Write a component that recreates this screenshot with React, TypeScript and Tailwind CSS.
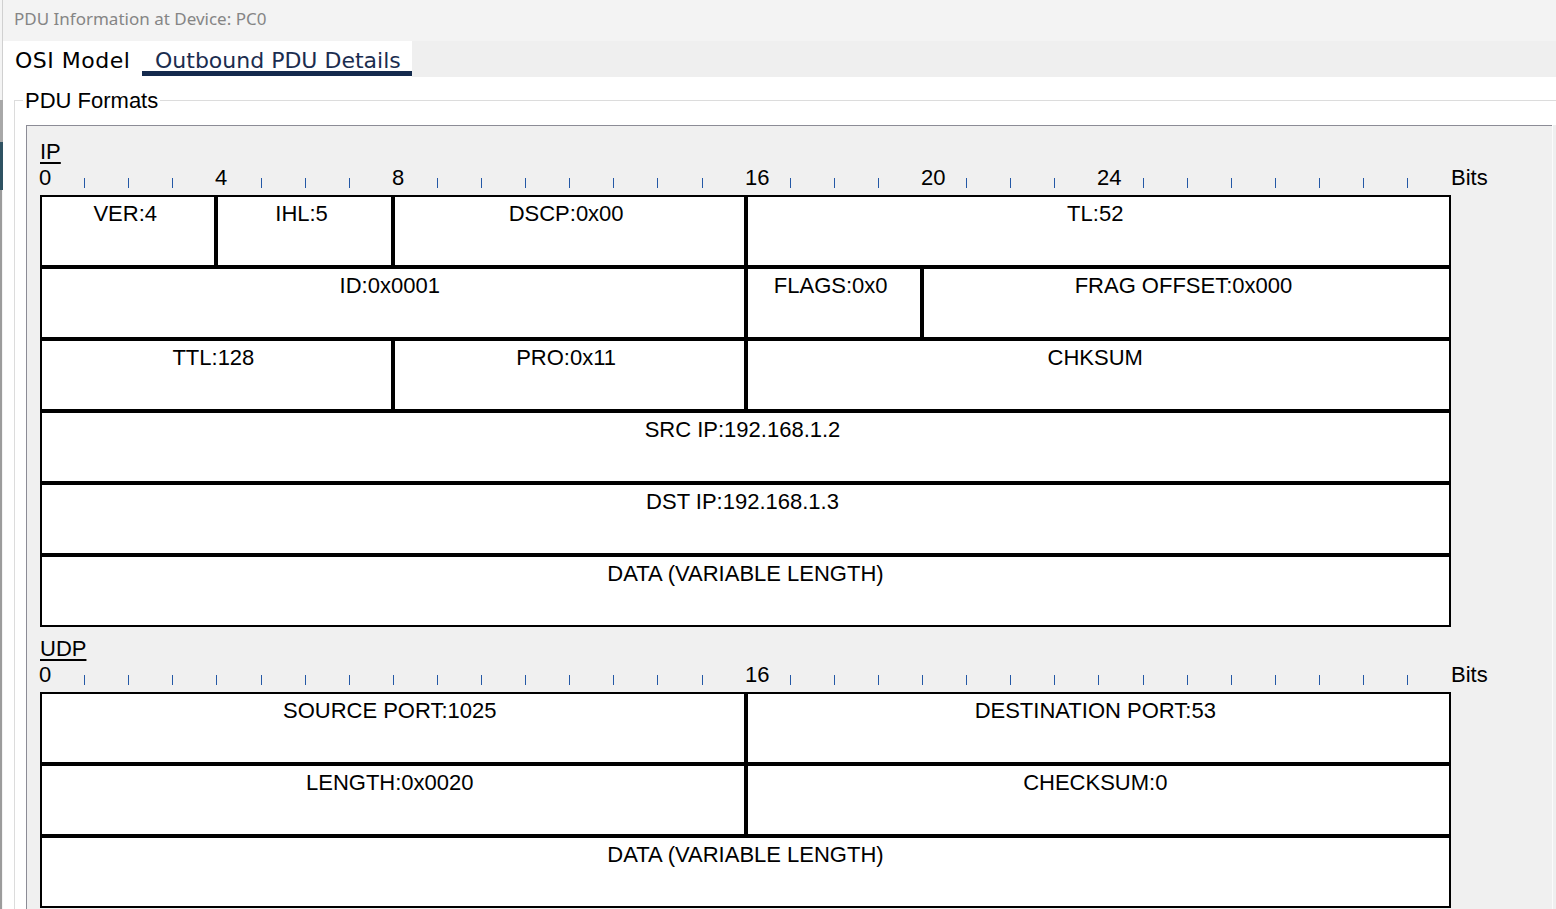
import React from "react";

const STEP = 44.1;

function Ruler({ marks }: { marks: number[] }) {
  const ticks: number[] = [];
  for (let i = 1; i < 32; i++) if (!marks.includes(i)) ticks.push(i);
  return (
    <div className="relative h-[31px] w-[1480px] shrink-0">
      {marks.map((m) => (
        <span
          key={"m" + m}
          className="absolute top-[1px] text-[22px] leading-[25px] text-black"
          style={{ left: Math.round(m * STEP) - 1 }}
        >
          {m}
        </span>
      ))}
      {ticks.map((t) => (
        <span
          key={"t" + t}
          className="absolute top-[14px] h-[10px] w-px bg-[#2458a6]"
          style={{ left: Math.round(t * STEP) }}
        />
      ))}
      <span className="absolute left-[1411px] top-[1px] text-[22px] leading-[25px] text-black">
        Bits
      </span>
    </div>
  );
}

function Cell({ label, span, centered }: { label: string; span: string; centered?: boolean }) {
  return (
    <div
      className={`${span} ${centered ? "" : "pr-[6px]"} h-[72px] border-2 border-black bg-white pt-[4px] text-center text-[22px] leading-[25px] text-black whitespace-nowrap`}
    >
      {label}
    </div>
  );
}

function Label({ text }: { text: string }) {
  return (
    <div className="h-[25px] shrink-0 text-[22px] leading-[25px] text-black">
      <span className="underline decoration-[2px] underline-offset-[3px]">{text}</span>
    </div>
  );
}

export default function App() {
  return (
    <div className="relative flex h-[909px] w-[1556px] overflow-hidden bg-white font-['Liberation_Sans',Arial,sans-serif]">
      {/* left window edge */}
      <div className="flex w-[3px] shrink-0 flex-col">
        <div className="h-[100px] border-r border-[#d0d0d0] bg-[#f4f4f4]" />
        <div className="h-[42px] bg-[#a8a8a8]" />
        <div className="h-[48px] bg-[#2f5262]" />
        <div className="flex-1 border-r border-[#f4f4f4] bg-[#9c9c9c]" />
      </div>

      <div className="flex min-w-0 flex-1 flex-col">
        {/* title bar */}
        <div className="h-[41px] shrink-0 bg-[#f3f3f3] pl-[11px] pt-[7px] font-['Noto_Sans',sans-serif] text-[17px] leading-[23px] text-[#858585]">
          PDU Information at Device: PC0
        </div>

        {/* tabs */}
        <div className="flex h-[36px] shrink-0 bg-[#efefef] font-['DejaVu_Sans',sans-serif] text-[22px] leading-[26px]">
          <div className="flex h-full w-[409px] bg-white">
            <div className="w-[139px] pl-[12px] pt-[7px] tracking-[0.5px] text-black">OSI Model</div>
            <div className="h-[35px] w-[270px] border-b-[5px] border-[#142a4d] pl-[13px] pt-[7px] text-[#1b2d4f]">
              Outbound PDU Details
            </div>
          </div>
        </div>

        {/* group box */}
        <div className="flex min-h-0 flex-1 flex-col bg-white pt-[23px]">
          <div className="relative ml-[11px] flex min-h-0 flex-1 flex-col border-l border-t border-[#dcdcdc] pl-[11px] pt-[24px]">
            <span className="absolute left-[8px] top-[-13px] bg-white px-[2px] text-[22px] leading-[25px] text-black">
              PDU Formats
            </span>

            {/* inner panel */}
            <div className="flex min-h-0 flex-1">
              <div className="flex min-w-0 flex-1 flex-col border-l border-t border-[#8c8c96] bg-[#f0f0f0] pl-[13px] pt-[13px]">
                <Label text="IP" />
                <Ruler marks={[0, 4, 8, 16, 20, 24]} />
                <div className="grid w-[1411px] shrink-0 grid-cols-[repeat(32,minmax(0,1fr))]">
                  <Cell label="VER:4" span="col-span-4" />
                  <Cell label="IHL:5" span="col-span-4" />
                  <Cell label="DSCP:0x00" span="col-span-8" />
                  <Cell label="TL:52" span="col-span-16" />
                  <Cell label="ID:0x0001" span="col-span-16" />
                  <Cell label="FLAGS:0x0" span="col-span-4" />
                  <Cell label="FRAG OFFSET:0x000" span="col-span-12" />
                  <Cell label="TTL:128" span="col-span-8" />
                  <Cell label="PRO:0x11" span="col-span-8" />
                  <Cell label="CHKSUM" span="col-span-16" />
                  <Cell label="SRC IP:192.168.1.2" span="col-span-32" />
                  <Cell label="DST IP:192.168.1.3" span="col-span-32" />
                  <Cell label="DATA (VARIABLE LENGTH)" span="col-span-32" centered />
                </div>

                <div className="mt-[9px]">
                  <Label text="UDP" />
                </div>
                <Ruler marks={[0, 16]} />
                <div className="grid w-[1411px] shrink-0 grid-cols-[repeat(32,minmax(0,1fr))]">
                  <Cell label="SOURCE PORT:1025" span="col-span-16" />
                  <Cell label="DESTINATION PORT:53" span="col-span-16" />
                  <Cell label="LENGTH:0x0020" span="col-span-16" />
                  <Cell label="CHECKSUM:0" span="col-span-16" />
                  <Cell label="DATA (VARIABLE LENGTH)" span="col-span-32" centered />
                </div>
              </div>
              <div className="w-px shrink-0 bg-[#fbfbfb]" />
              <div className="w-[3px] shrink-0 bg-[#efefef]" />
            </div>
          </div>
        </div>
      </div>
    </div>
  );
}
